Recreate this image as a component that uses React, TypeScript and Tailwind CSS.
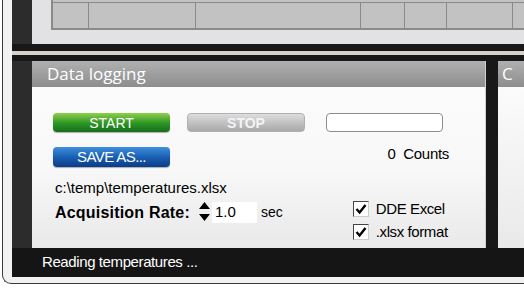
import React from "react";

const cols = [36, 107, 165, 44, 42, 66, 13];

function Btn({ label, cls, text }: { label: string; cls: string; text: string }) {
  return (
    <div
      className={`flex h-[19px] w-[117px] items-center justify-center rounded-[4px] leading-none ${cls} ${text}`}
      style={{ fontFamily: '"Liberation Sans", Arial, sans-serif' }}
    >
      {label}
    </div>
  );
}

function Check({ label }: { label: string }) {
  return (
    <div className="flex h-[16px] items-center gap-[7px]">
      <div className="flex h-[16px] w-[16px] shrink-0 items-center justify-center border border-t-[#444] border-l-[#444] border-r-[#ccc] border-b-[#ccc] bg-white">
        <svg width="12" height="12" viewBox="0 0 12 12">
          <path d="M1.5 6 L4.6 9.5 L10.5 2" fill="none" stroke="#000" strokeWidth="2.4" />
        </svg>
      </div>
      <span className="text-[15px] tracking-[-0.4px] text-black">{label}</span>
    </div>
  );
}

export default function App() {
  return (
    <div
      className="h-[289px] w-[524px] overflow-hidden bg-white pl-[2px]"
      style={{ fontFamily: '"Liberation Sans", Arial, sans-serif' }}
    >
      <div className="h-[284px] rounded-bl-[9px] border-b border-l border-[#3a3a3a] bg-[#f2f2f2] pb-[6px] pl-[9px]">
        <div className="flex h-[277px] flex-col bg-[#2c2c2c]">
          {/* top panel with grid */}
          <div className="flex h-[44px] shrink-0 pl-[20px]">
            <div className="flex-1 bg-[#e2e2e4] pl-[19px]">
              <div className="h-[30px] border-b-2 border-l-2 border-[#8a8a8a] bg-[#c2c2c2]">
                <div className="h-[3px] border-b border-[#8a8a8a]" />
                <div className="flex h-[25px]">
                  {cols.map((w, i) => (
                    <div key={i} className="h-full border-r border-[#8a8a8a]" style={{ width: w }} />
                  ))}
                </div>
              </div>
            </div>
          </div>
          <div className="h-[7px] shrink-0 bg-[#181818]" />
          <div className="h-[4px] shrink-0 bg-[#d6d2ca]" />
          <div className="h-[6px] shrink-0 bg-[#181818]" />

          {/* panels */}
          <div className="flex h-[187px] shrink-0 overflow-hidden">
            <div className="w-[20px] bg-[#2c2c2c]" />
            <div className="flex w-[454px] flex-col border-r border-[#cfcfcf]">
              <div
                className="flex h-[26px] shrink-0 items-center bg-linear-to-b from-[#b0b0b0] to-[#8d8d8d] pl-[15px] text-[17px] text-white"
                style={{ fontFamily: '"Open Sans", "Noto Sans", sans-serif' }}
              >
                Data logging
              </div>
              <div className="flex flex-1 flex-col bg-linear-to-b from-[#fbfbfb] via-[#f8f8f8] to-[#e9e9e9] pl-[21px] pt-[26px]">
                <div className="flex">
                  <Btn label="START" cls="bg-linear-to-b from-[#8ed04a] via-[#2f9a27] to-[#176d1a] shadow-[0_1px_1px_rgba(0,0,0,0.3)]" text="text-[14px] text-white" />
                  <div className="ml-[17px]">
                    <Btn label="STOP" cls="w-[118px] bg-linear-to-b from-[#dedede] via-[#c2c2c2] to-[#a9a9a9] border border-[#b0b0b0]" text="text-[14px] text-[#f4f4f4] font-bold" />
                  </div>
                  <div className="ml-[21px] h-[19px] w-[117px] rounded-[4px] border border-[#8e8e8e] bg-white" />
                </div>
                <div className="mt-[15px] flex items-start">
                  <div className="flex h-[20px] w-[117px] items-center justify-center rounded-[4px] bg-linear-to-b from-[#3f90dc] via-[#1a5fb4] to-[#0c3c86] text-[15px] tracking-[-0.6px] text-white shadow-[0_1px_1px_rgba(0,0,0,0.3)]">
                    SAVE AS...
                  </div>
                  <div className="ml-auto mr-[36px] mt-[-4px] text-[15px] tracking-[-0.3px] text-black">
                    0&nbsp;&nbsp;Counts
                  </div>
                </div>
                <div className="ml-[2px] mt-[12px] text-[15px] leading-[17px] text-black">
                  c:\temp\temperatures.xlsx
                </div>
                <div className="mt-[5px] flex items-start">
                  <div className="ml-[2px] mt-[1px] flex h-[21px] items-center">
                    <span className="w-[144px] text-[16px] font-bold tracking-[0.2px] text-black">Acquisition Rate:</span>
                    <svg width="11" height="21" viewBox="0 0 11 21">
                      <path d="M5.5 0 L11 7 L0 7 Z M0 12 L11 12 L5.5 19 Z" fill="#000" />
                    </svg>
                    <div className="ml-[2px] flex h-[21px] w-[45px] items-center bg-white pl-[3px] text-[15px] text-black">
                      1.0
                    </div>
                    <span className="ml-[4px] text-[14px] text-black">sec</span>
                  </div>
                  <div className="ml-[70px] flex flex-col gap-[7px]">
                    <Check label="DDE Excel" />
                    <Check label=".xlsx format" />
                  </div>
                </div>
              </div>
            </div>
            <div className="w-[12px] bg-[#181818]" />
            <div className="flex flex-1 flex-col">
              <div
                className="flex h-[26px] shrink-0 items-center bg-linear-to-b from-[#b0b0b0] to-[#8d8d8d] pl-[4px] text-[17px] text-white"
                style={{ fontFamily: '"Open Sans", "Noto Sans", sans-serif' }}
              >
                C
              </div>
              <div className="flex-1 bg-linear-to-b from-[#fbfbfb] to-[#e9e9e9]" />
            </div>
          </div>

          {/* status bar */}
          <div className="flex h-[29px] shrink-0 items-center bg-[#151515] pl-[30px] text-[15px] tracking-[-0.4px] text-white">
            Reading temperatures ...
          </div>
        </div>
      </div>
    </div>
  );
}
